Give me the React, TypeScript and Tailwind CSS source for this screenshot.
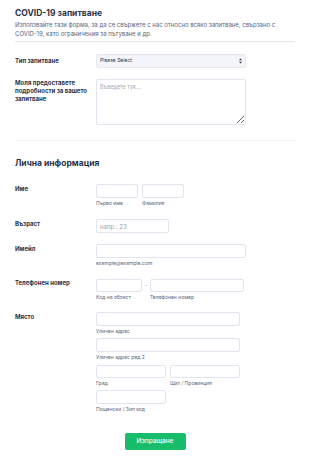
const Sub = ({ children }: { children: React.ReactNode }) => (
    <div className="text-[5px] leading-[6px] text-[#57647e] mt-[2px]">{children}</div>
);

const Box = ({ className = "" }: { className?: string }) => (
    <div className={"border border-[#e2e5ef] rounded-[2px] bg-white " + className} />
);

const Label = ({ children, pt = "pt-[1px]" }: { children: React.ReactNode; pt?: string }) => (
    <div className={"w-[81px] shrink-0 text-[6px] leading-[8px] font-bold text-[#2c3345] " + pt}>{children}</div>
);

const App = () => {
    return (
        <div className="w-[310px] h-[461px] bg-white px-[15px] pt-[8px] overflow-hidden" style={{ fontFamily: "Inter, 'Noto Sans', sans-serif" }}>
            <h1 className="text-[8.5px] leading-[10px] font-bold text-[#2c3345]">COVID-19 запитване</h1>
            <p className="mt-[2px] text-[6px] leading-[9px] text-[#57647e] pr-[10px]">
                Използвайте тази форма, за да се свържете с нас относно всяко запитване, свързано с COVID-19, като ограничения за пътуване и др.
            </p>
            <div className="mt-[3px] border-t border-[#e4e6ee]" />

            <div className="mt-[12px] flex">
                <Label pt="pt-[3px]">Тип запитване</Label>
                <div className="w-[150px] h-[14px] flex items-center justify-between px-[3px] bg-[#f4f5fa] border border-[#e6e8f0] rounded-[2px]">
                    <span className="text-[5px] text-[#2c3345]">Please Select</span>
                    <svg width="3" height="6" viewBox="0 0 3 6"><path d="M0 2.2 L1.5 0.5 L3 2.2 Z M0 3.8 L1.5 5.5 L3 3.8 Z" fill="#2c3345" /></svg>
                </div>
            </div>

            <div className="mt-[11px] flex">
                <Label pt="pt-0">Моля предоставете подробности за вашето запитване</Label>
                <textarea
                    placeholder="Въведете тук..."
                    className="w-[150px] h-[46px] border border-[#e2e5ef] rounded-[2px] px-[3px] py-[3px] text-[5.5px] leading-[8px] text-[#2c3345] placeholder:text-[#a3a9b6] outline-none"
                />
            </div>

            <div className="mt-[15px] border-t border-[#eceef3]" />

            <h2 className="mt-[17px] text-[8.5px] leading-[10px] font-bold text-[#2c3345]">Лична информация</h2>

            <div className="mt-[16px] flex">
                <Label>Име</Label>
                <div className="flex gap-[4px]">
                    <div>
                        <Box className="w-[42px] h-[14px]" />
                        <Sub>Първо име</Sub>
                    </div>
                    <div>
                        <Box className="w-[42px] h-[14px]" />
                        <Sub>Фамилия</Sub>
                    </div>
                </div>
            </div>

            <div className="mt-[13px] flex">
                <Label>Възраст</Label>
                <div className="w-[73px] h-[14px] border border-[#e2e5ef] rounded-[2px] flex items-center px-[3px] text-[6px] text-[#9aa1b0]">
                    напр.: 23
                </div>
            </div>

            <div className="mt-[11px] flex">
                <Label>Имейл</Label>
                <div>
                    <Box className="w-[150px] h-[14px]" />
                    <Sub>example@example.com</Sub>
                </div>
            </div>

            <div className="mt-[13px] flex">
                <Label pt="pt-0">Телефонен номер</Label>
                <div className="flex">
                    <div>
                        <Box className="w-[46px] h-[13px]" />
                        <Sub>Код на област</Sub>
                    </div>
                    <div className="w-[8px] text-center text-[5px] leading-[13px] text-[#57647e]">-</div>
                    <div>
                        <Box className="w-[94px] h-[13px]" />
                        <Sub>Телефонен номер</Sub>
                    </div>
                </div>
            </div>

            <div className="mt-[12px] flex">
                <Label>Място</Label>
                <div className="flex flex-col">
                    <Box className="w-[144px] h-[14px]" />
                    <Sub>Уличен адрес</Sub>
                    <Box className="w-[144px] h-[14px] mt-[4px]" />
                    <Sub>Уличен адрес ред 2</Sub>
                    <div className="flex gap-[4px] mt-[5px]">
                        <div>
                            <Box className="w-[70px] h-[13px]" />
                            <Sub>Град</Sub>
                        </div>
                        <div>
                            <Box className="w-[70px] h-[13px]" />
                            <Sub>Щат / Провинция</Sub>
                        </div>
                    </div>
                    <div className="mt-[4px]">
                        <Box className="w-[70px] h-[14px]" />
                        <Sub>Пощенски / Зип код</Sub>
                    </div>
                </div>
            </div>

            <div className="mt-[21px] flex justify-center">
                <button className="w-[61px] h-[17px] bg-[#18bd6b] rounded-[2px] text-white text-[6.5px] font-medium">
                    Изпращане
                </button>
            </div>
        </div>
    );
};

export default App;
